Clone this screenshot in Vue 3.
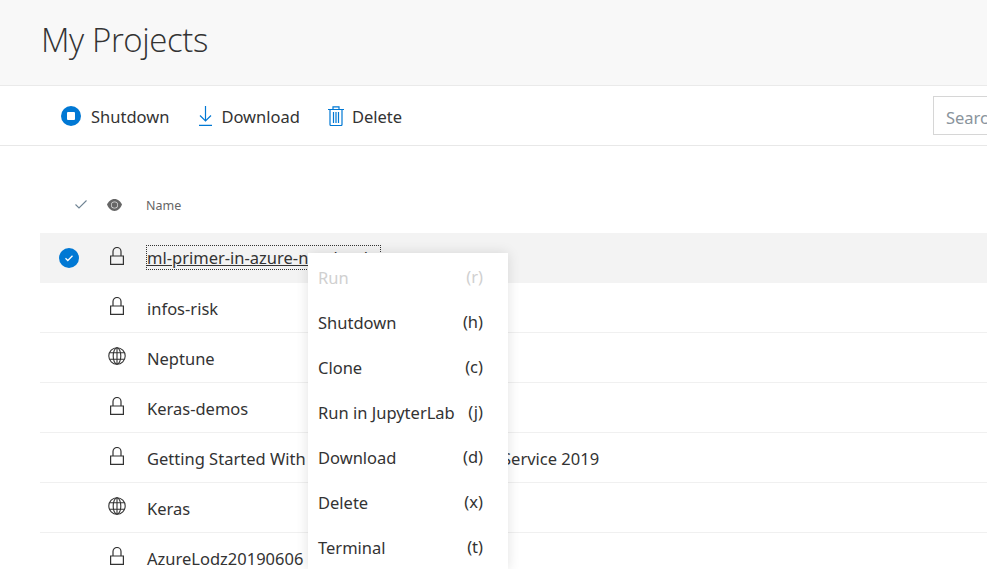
<template>
  <div class="page">
    <header class="title-bar">
      <h1>My Projects</h1>
    </header>

    <div class="toolbar">
      <button class="cmd">
        <svg width="20" height="20" viewBox="0 0 20 20">
          <circle cx="10" cy="10" r="10" fill="#0078d4" />
          <rect x="6" y="6" width="8" height="8" rx="1" fill="#fff" />
        </svg>
        <span>Shutdown</span>
      </button>
      <button class="cmd download">
        <svg width="13" height="20" viewBox="0 0 13 20" fill="none" stroke="#0078d4" stroke-width="1.2">
          <path d="M6.500 0v15M1 9.500l5.500 5.500 5.500-5.500M0 19.400h13" />
        </svg>
        <span>Download</span>
      </button>
      <button class="cmd trash">
        <svg width="16" height="20" viewBox="0 0 16 20" fill="none" stroke="#0078d4" stroke-width="1.2">
          <path d="M0 3.500h16M5 3.500V.8h6v2.700M2 3.500v15a1 1 0 0 0 1 1h10a1 1 0 0 0 1-1v-15M5.500 6v11M8 6v11M10.500 6v11" />
        </svg>
        <span>Delete</span>
      </button>
      <div class="search">Search</div>
    </div>

    <section class="list">
      <div class="list-head">
        <svg class="head-check" width="12" height="9" viewBox="0 0 12 9" fill="none" stroke="#6f8494" stroke-width="1.1">
          <path d="M.5 4.500l3.500 3.500L11.500.5" />
        </svg>
        <svg class="head-eye" width="15" height="12" viewBox="0 0 15 12">
          <path d="M7.500 0C4 0 1.300 2.500 0 5.500 1.300 9 4 12 7.500 12S13.700 9 15 5.500C13.700 2.500 11 0 7.500 0z" fill="#666" />
          <circle cx="7.500" cy="6" r="3.500" fill="#ddd" />
          <circle cx="7.500" cy="6" r="2.800" fill="#666" />
        </svg>
        <span class="head-name">Name</span>
      </div>

      <div v-for="(p, i) in projects" :key="p.name" class="row" :class="{ selected: i === 0 }">
        <span class="col-check">
          <svg v-if="i === 0" width="20" height="20" viewBox="0 0 20 20">
            <circle cx="10" cy="10" r="10" fill="#0078d4" />
            <path d="M6.500 10.300l2.300 2.200 4.700-4.800" fill="none" stroke="#fff" stroke-width="1.300" />
          </svg>
        </span>
        <span class="col-icon">
          <svg v-if="p.locked" width="14" height="18" viewBox="0 0 14 18" fill="none" stroke="#333" stroke-width="1.200">
            <path d="M.6 9h12.800v8.400H.6zM3 9V4.500a4 4 0 0 1 8 0V9" />
          </svg>
          <svg v-else width="18" height="18" viewBox="0 0 18 18" fill="none" stroke="#333" stroke-width="1.100">
            <circle cx="9" cy="9" r="8.200" />
            <ellipse cx="9" cy="9" rx="3.800" ry="8.200" />
            <path d="M1.800 5.800h14.400M1.800 12.200h14.400M9 .8v16.400" />
          </svg>
        </span>
        <span class="name" :class="{ focused: i === 0 }">{{ p.name }}</span>
      </div>
    </section>

    <ul class="menu">
      <li v-for="m in menuItems" :key="m.label" :class="{ disabled: m.disabled }">
        <span>{{ m.label }}</span>
        <span class="key">({{ m.key }})</span>
      </li>
    </ul>
  </div>
</template>

<script setup>
const projects = [
  { name: 'ml-primer-in-azure-notebooks', locked: true },
  { name: 'infos-risk', locked: true },
  { name: 'Neptune', locked: false },
  { name: 'Keras-demos', locked: true },
  { name: 'Getting Started With Azure Machine Learning Service 2019', locked: true },
  { name: 'Keras', locked: false },
  { name: 'AzureLodz20190606', locked: true }
]

const menuItems = [
  { label: 'Run', key: 'r', disabled: true },
  { label: 'Shutdown', key: 'h' },
  { label: 'Clone', key: 'c' },
  { label: 'Run in JupyterLab', key: 'j' },
  { label: 'Download', key: 'd' },
  { label: 'Delete', key: 'x' },
  { label: 'Terminal', key: 't' }
]
</script>

<style>
html, body {
  margin: 0;
  height: 100%;
  overflow: hidden;
  background: #fff;
}
</style>

<style scoped>
.page {
  position: relative;
  width: 1200px;
  height: 569px;
  overflow: hidden;
  font-family: "Noto Sans", "Open Sans", sans-serif;
  font-size: 16.5px;
  color: #333;
}

.title-bar {
  height: 79px;
  padding: 0 0 6px 41px;
  background: #f8f8f8;
  border-bottom: 1px solid #eaeaea;
  display: flex;
  align-items: center;
}

h1 {
  margin: 0;
  font-size: 33px;
  letter-spacing: -0.4px;
  font-weight: 300;
  font-family: "Open Sans", sans-serif;
  color: #333;
}

.toolbar {
  height: 59px;
  border-bottom: 1px solid #e8e8e8;
  display: flex;
  align-items: center;
  padding: 0 67px 0 61px;
  gap: 30px;
}

.cmd {
  display: flex;
  align-items: center;
  gap: 10px;
  padding: 0;
  border: 0;
  background: none;
  font: inherit;
  color: #333;
}

.cmd span {
  margin-top: 2px;
}

.cmd.download {
  gap: 9px;
}

.cmd.trash {
  gap: 8px;
  margin-left: -2px;
}

.search {
  margin-left: auto;
  width: 200px;
  height: 39px;
  line-height: 41px;
  padding-left: 12px;
  box-sizing: border-box;
  border: 1px solid #d6d6d6;
  color: #8a949c;
}

.list {
  padding-left: 40px;
}

.list-head {
  height: 87px;
  display: flex;
  align-items: center;
  padding: 31px 0 0 35px;
  box-sizing: border-box;
  font-size: 12.5px;
  color: #666;
}

.head-check {
  margin-top: -2px;
}

.head-eye {
  margin-left: 20px;
}

.head-name {
  margin-left: 24px;
}

.row {
  height: 49px;
  display: flex;
  align-items: center;
  border-bottom: 1px solid #f0f0f0;
}

.row.selected {
  background: #f3f3f3;
  border-bottom-color: #f3f3f3;
}

.col-check {
  width: 58px;
  display: flex;
  justify-content: center;
}

.col-icon {
  width: 38px;
  display: flex;
  justify-content: center;
  margin-top: -4px;
}

.name {
  margin-left: 11px;
  margin-top: 2px;
}

.name.focused {
  outline: 1px dotted #333;
  text-decoration: underline;
  margin-top: 0;
}

.menu {
  position: absolute;
  left: 308px;
  top: 253px;
  width: 200px;
  margin: 0;
  padding: 2px 0 0;
  list-style: none;
  background: #fff;
  box-shadow: 0 0 12px rgba(0, 0, 0, 0.12);
}

.menu li {
  height: 45px;
  display: flex;
  align-items: center;
  justify-content: space-between;
  padding: 0 25px 0 10px;
}

.menu li.disabled {
  color: #d0d0d0;
}

.key {
  margin-top: -3px;
}
</style>
